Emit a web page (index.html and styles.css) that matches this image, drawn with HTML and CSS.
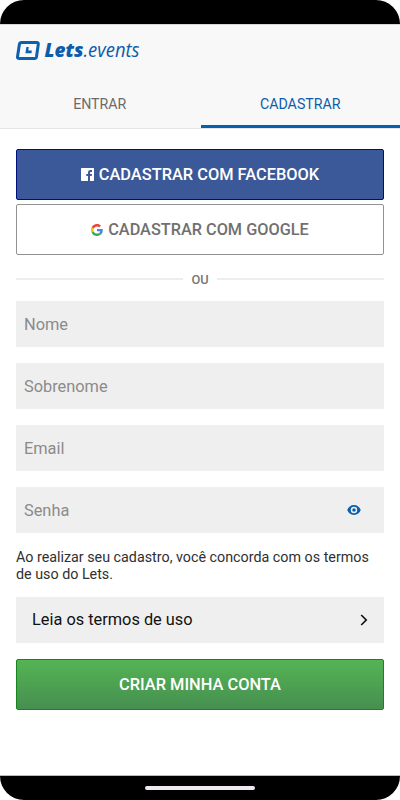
FILE: index.html
```html
<!DOCTYPE html>
<html lang="pt-BR">
<head>
<meta charset="utf-8">
<title>Lets.events</title>
<link rel="stylesheet" href="styles.css">
</head>
<body>
<div class="phone">
  <div class="status-bar"></div>
  <header class="header">
    <svg class="logo" width="130" height="32" viewBox="0 -4 130 32">
      <path d="M5.600 3.400H20.800Q22.600 3.400 22.300 5.200L20.500 17.700Q20.200 19.500 18.400 19.500H3.200Q1.200 19.500 1.500 17.700L3.400 5.200Q3.700 3.400 5.600 3.400Z" fill="none" stroke="#0c60ad" stroke-width="3"/>
      <path d="M10.400 8.100H12.700L12.300 11.600H15.800L15.500 14.300H9.400Z" fill="#0c60ad"/>
      <text class="logo-bold" x="28.500" y="18.300" textLength="39" lengthAdjust="spacingAndGlyphs">Lets</text>
      <text class="logo-light" x="67.500" y="18.300" textLength="56" lengthAdjust="spacingAndGlyphs">.events</text>
    </svg>
    <nav class="tabs">
      <a class="tab">ENTRAR</a>
      <a class="tab active">CADASTRAR</a>
    </nav>
  </header>
  <main class="content">
    <button class="btn facebook">
      <svg width="13" height="13" viewBox="0 0 13 13"><path fill="#fff" fill-rule="evenodd" d="M.7 0H12.300Q13 0 13 .7V12.300Q13 13 12.300 13H9V8H10.700L11 6H9V4.800Q9 4 9.900 4H11V2.100H9.300Q7 2.100 7 4.500V6H5.300V8H7V13H.7Q0 13 0 12.300V.7Q0 0 .7 0Z"/></svg>
      <span>CADASTRAR COM FACEBOOK</span>
    </button>
    <button class="btn google">
      <svg width="12" height="12" viewBox="0 0 48 48">
        <path fill="#ea4335" d="M24 9.500c3.540 0 6.710 1.220 9.210 3.600l6.850-6.850C35.900 2.380 30.470 0 24 0 14.620 0 6.510 5.380 2.560 13.220l7.980 6.190C12.430 13.720 17.740 9.500 24 9.500z"/>
        <path fill="#4285f4" d="M46.980 24.550c0-1.570-.15-3.090-.38-4.550H24v9.020h12.940c-.58 2.960-2.260 5.480-4.780 7.180l7.730 6c4.510-4.180 7.090-10.360 7.090-17.650z"/>
        <path fill="#fbbc05" d="M10.530 28.590c-.48-1.450-.76-2.990-.76-4.590s.27-3.140.76-4.590l-7.980-6.190C.92 16.460 0 20.120 0 24s.92 7.540 2.560 10.780l7.970-6.190z"/>
        <path fill="#34a853" d="M24 48c6.480 0 11.930-2.130 15.890-5.810l-7.730-6c-2.150 1.450-4.920 2.300-8.160 2.300-6.260 0-11.570-4.220-13.470-9.910l-7.980 6.190C6.510 42.620 14.620 48 24 48z"/>
      </svg>
      <span>CADASTRAR COM GOOGLE</span>
    </button>
    <div class="divider"><span>OU</span></div>
    <div class="field">Nome</div>
    <div class="field">Sobrenome</div>
    <div class="field">Email</div>
    <div class="field password"><span>Senha</span>
      <svg width="14" height="14" viewBox="0 0 24 24"><path fill="#0c5fae" d="M12 3.500C6.500 3.500 2 7 .5 12 2 17 6.500 20.500 12 20.500S22 17 23.500 12C22 7 17.500 3.500 12 3.500zm0 14a5.500 5.500 0 1 1 0-11 5.500 5.500 0 0 1 0 11zm0-8.500a3 3 0 1 0 0 6 3 3 0 0 0 0-6z"/></svg>
    </div>
    <p class="notice">Ao realizar seu cadastro, você concorda com os termos<br>de uso do Lets.</p>
    <div class="terms"><span>Leia os termos de uso</span>
      <svg width="8" height="12" viewBox="0 0 8 12"><path fill="none" stroke="#111" stroke-width="1.700" d="M1.200 1L6.200 6L1.200 11"/></svg>
    </div>
    <button class="btn submit"><span>CRIAR MINHA CONTA</span></button>
  </main>
  <footer class="nav-bar"><div class="handle"></div></footer>
</div>
</body>
</html>
```
FILE: styles.css
```css
* { box-sizing: border-box; }
body { margin: 0; background: #fff; font-family: Roboto, "Liberation Sans", sans-serif; }
.phone { width: 400px; height: 800px; display: flex; flex-direction: column; overflow: hidden; border-radius: 24px; background: #fff; }
.status-bar { height: 24px; background: #000; flex: none; }
.header { height: 105px; flex: none; background: #f8f8f8; border-top: 1px solid #d9d7d6; border-bottom: 1px solid #e6e6e6; display: flex; flex-direction: column; }
.logo { display: block; margin: 10px 0 0 16px; flex: none; overflow: visible; }
.logo text { font-family: "Open Sans", "Noto Sans", sans-serif; font-style: italic; fill: #0c5cab; }
.logo .logo-bold { font-size: 18.5px; font-weight: 800; }
.logo .logo-light { font-size: 20px; font-weight: 400; }
.tabs { display: flex; flex: 1; margin-top: 13px; }
.tab { flex: 1; display: flex; align-items: center; justify-content: center; font-size: 14.2px; color: #6b6b6b; border-bottom: 3px solid transparent; padding-top: 3px; }
.tab.active { color: #0d5dac; border-bottom-color: #0560b0; margin-left: 1px; }
.content { flex: 1; padding: 20px 16px 0; display: flex; flex-direction: column; }
.btn { height: 51px; flex: none; border-radius: 2px; padding: 0; font: 500 16.4px Roboto, sans-serif; display: flex; align-items: center; justify-content: center; gap: 5px; }
.facebook { background: #3b5998; border: 1px solid #000f80; color: #fff; }
.google { background: #fff; border: 1px solid #929292; color: #707070; margin-top: 4px; }
.google span { font-size: 16.3px; }
.divider { height: 16px; margin: 16px 0 14px; display: flex; align-items: center; gap: 8px; font-size: 12.8px; font-weight: 500; color: #777; flex: none; }
.divider::before, .divider::after { content: ""; flex: 1; height: 2px; background: #eee; }
.field { height: 46px; flex: none; margin-bottom: 16px; padding: 0 8px; background: #efefef; color: #8b8b8b; font-size: 16.35px; display: flex; align-items: center; }
.password { justify-content: space-between; padding-right: 23px; }
.notice { margin: 0 0 15px; font-size: 14.3px; line-height: 16.5px; color: #303030; flex: none; white-space: nowrap; }
.terms { height: 46px; flex: none; background: #efefef; padding: 0 16px 1px; display: flex; align-items: center; justify-content: space-between; font-size: 16.35px; color: #111; }
.submit { margin-top: 16px; border: 1px solid #16851c; background: linear-gradient(#54b454, #468f50); color: #fff; }
.nav-bar { height: 25px; flex: none; background: #000; border-top: 1px solid #bbb; display: flex; justify-content: center; align-items: center; }
.handle { width: 110px; height: 4px; border-radius: 2px; background: #eee9ee; }
```
